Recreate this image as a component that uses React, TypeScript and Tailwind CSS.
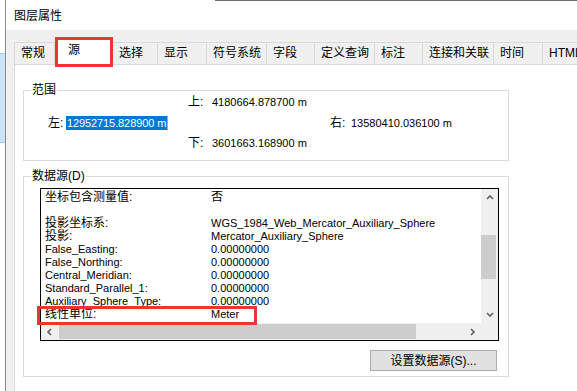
import React from "react";

const tabs: { t: string; c: string; sel?: boolean; first?: boolean }[] = [
  { t: "常规", c: "w-[41px]", first: true },
  { t: "源", c: "w-[58px]", sel: true },
  { t: "选择", c: "w-[45px]" },
  { t: "显示", c: "w-[49px]" },
  { t: "符号系统", c: "w-[60px]" },
  { t: "字段", c: "w-[48px]" },
  { t: "定义查询", c: "w-[60px]" },
  { t: "标注", c: "w-[48px]" },
  { t: "连接和关联", c: "w-[71px]" },
  { t: "时间", c: "w-[49px]" },
  { t: "HTML 弹出窗口", c: "w-[90px]" },
];

const rows: { l: string; v: string; cjk?: boolean }[] = [
  { l: "坐标包含测量值:", v: "否", cjk: true },
  { l: "", v: "" },
  { l: "投影坐标系:", v: "WGS_1984_Web_Mercator_Auxiliary_Sphere", cjk: true },
  { l: "投影:", v: "Mercator_Auxiliary_Sphere", cjk: true },
  { l: "False_Easting:", v: "0.00000000" },
  { l: "False_Northing:", v: "0.00000000" },
  { l: "Central_Meridian:", v: "0.00000000" },
  { l: "Standard_Parallel_1:", v: "0.00000000" },
  { l: "Auxiliary_Sphere_Type:", v: "0.00000000" },
  { l: "线性单位:", v: "Meter", cjk: true },
];

function Chev({ dir }: { dir: "up" | "down" | "left" | "right" }) {
  const pts =
    dir === "up"
      ? "1,5 4,2 7,5"
      : dir === "down"
      ? "1,2 4,5 7,2"
      : dir === "left"
      ? "5,1 2,4 5,7"
      : "2,1 5,4 2,7";
  return (
    <svg width="8" height="8" viewBox="0 0 8 8">
      <polyline points={pts} fill="none" stroke="#606060" strokeWidth="1.6" />
    </svg>
  );
}

export default function App() {
  return (
    <div className="relative w-[577px] h-[391px] overflow-hidden bg-white flex font-['Liberation_Sans','Noto_Sans_CJK_SC',sans-serif] text-black">
      {/* desktop strip */}
      <div className="w-[5px] flex flex-col shrink-0">
        <div className="h-[53px]" />
        <div className="h-[90px] bg-[#cce4f7] border-y border-[#99c9ef]" />
      </div>

      {/* window */}
      <div className="flex-1 border-l border-[#8a8a8a] flex flex-col">
        <div className="h-[30px] bg-white flex flex-col">
          <div className="ml-[209px] h-px bg-[#6e6e6e]" />
          <div className="flex-1 flex items-center pl-[8px] text-[12px] leading-[14px]">图层属性</div>
        </div>

        <div className="flex-1 bg-[#f0f0f0] pl-[8px] pt-[12px] flex flex-col">
          {/* tabs */}
          <div className="flex items-end h-[22px]">
            {tabs.map((tab) =>
              tab.sel ? (
                <div
                  key={tab.t}
                  className={`${tab.c} shrink-0 relative z-10 h-[27px] -mb-px bg-white border-t border-x border-[#d9d9d9] pl-[12px] pt-[3px] text-[12px] leading-[16px]`}
                >
                  {tab.t}
                </div>
              ) : (
                <div
                  key={tab.t}
                  className={`${tab.c} shrink-0 h-[22px] border-t border-r ${tab.first ? "border-l" : ""} border-[#d9d9d9] pl-[6px] text-[12px] leading-[20px] whitespace-nowrap overflow-hidden`}
                >
                  {tab.t}
                </div>
              )
            )}
          </div>

          {/* panel */}
          <div className="flex-1 bg-white border-t border-l border-[#d9d9d9] pl-[8px] pt-[19px]">
            {/* 范围 */}
            <fieldset className="w-[486px] border border-[#dcdcdc] pb-[11px]">
              <legend className="ml-[7px] px-[1px] text-[12px] leading-[12px]">范围</legend>
              <div className="flex h-[12px] items-center">
                <div className="ml-[164px] w-[24px] text-[12px] leading-[12px]">上:</div>
                <div className="text-[11px] leading-[12px]">4180664.878700 m</div>
              </div>
              <div className="flex h-[14px] mt-[8px] items-center">
                <div className="ml-[24px] w-[117px] flex shrink-0">
                  <div className="w-[18px] shrink-0 text-[12px] leading-[14px]">左:</div>
                  <div className="h-[14px] bg-[#0078d7] text-white text-[11px] leading-[14px] pl-[1px] pr-[1px] whitespace-nowrap tracking-[-0.1px] border-r border-[#f0a050]">
                    12952715.828900 m
                  </div>
                </div>
                <div className="ml-[165px] w-[21px] text-[12px] leading-[14px]">右:</div>
                <div className="text-[11px] leading-[14px] whitespace-nowrap">13580410.036100 m</div>
              </div>
              <div className="flex h-[12px] mt-[7px] items-center">
                <div className="ml-[164px] w-[24px] text-[12px] leading-[12px]">下:</div>
                <div className="text-[11px] leading-[12px]">3601663.168900 m</div>
              </div>
            </fieldset>

            {/* 数据源 */}
            <fieldset className="mt-[9px] w-[486px] border border-[#dcdcdc] pb-[5px]">
              <legend className="ml-[7px] px-[1px] text-[12px] leading-[12px]">数据源(D)</legend>
              <div className="ml-[16px] mt-[6px] w-[459px] h-[153px] border border-black grid grid-cols-[440px_17px] grid-rows-[134px_17px]">
                <div className="overflow-hidden pt-[2px] pl-[4px]">
                  {rows.map((r, i) => (
                    <div key={i} className="flex h-[13px] items-center whitespace-nowrap">
                      <div className={`w-[166px] shrink-0 ${r.cjk ? "text-[12px]" : "text-[11px]"} leading-[13px]`}>{r.l}</div>
                      <div className={`${r.v === "否" ? "text-[12px]" : "text-[11px]"} leading-[13px]`}>{r.v}</div>
                    </div>
                  ))}
                </div>
                <div className="bg-[#f0f0f0] flex flex-col">
                  <div className="h-[17px] flex items-center justify-center">
                    <Chev dir="up" />
                  </div>
                  <div className="flex-1">
                    <div className="mt-[29px] h-[44px] w-[15px] bg-[#cdcdcd]" />
                  </div>
                  <div className="h-[17px] flex items-center justify-center">
                    <Chev dir="down" />
                  </div>
                </div>
                <div className="bg-[#f0f0f0] flex items-center">
                  <div className="w-[17px] h-[17px] flex items-center justify-center">
                    <Chev dir="left" />
                  </div>
                  <div className="flex-1 h-[17px] py-[1px] pl-[1px]">
                    <div className="w-[357px] h-[15px] bg-[#cdcdcd]" />
                  </div>
                  <div className="w-[17px] h-[17px] flex items-center justify-center">
                    <Chev dir="right" />
                  </div>
                </div>
                <div className="bg-[#f0f0f0]" />
              </div>
              <div className="mt-[9px] ml-[346px] w-[127px] h-[21px] bg-[#e1e1e1] border border-[#adadad] flex items-center justify-center text-[12px] leading-[14px]">
                设置数据源(S)...
              </div>
            </fieldset>
          </div>
        </div>
      </div>

      {/* annotation boxes */}
      <div className="absolute z-20 left-[55px] top-[37px] w-[58px] h-[30px] border-[3px] border-[#ee3535] pointer-events-none" />
      <div className="absolute z-20 left-[37px] top-[306px] w-[220px] h-[19px] border-[3px] border-[#ee3535] pointer-events-none" />
    </div>
  );
}
